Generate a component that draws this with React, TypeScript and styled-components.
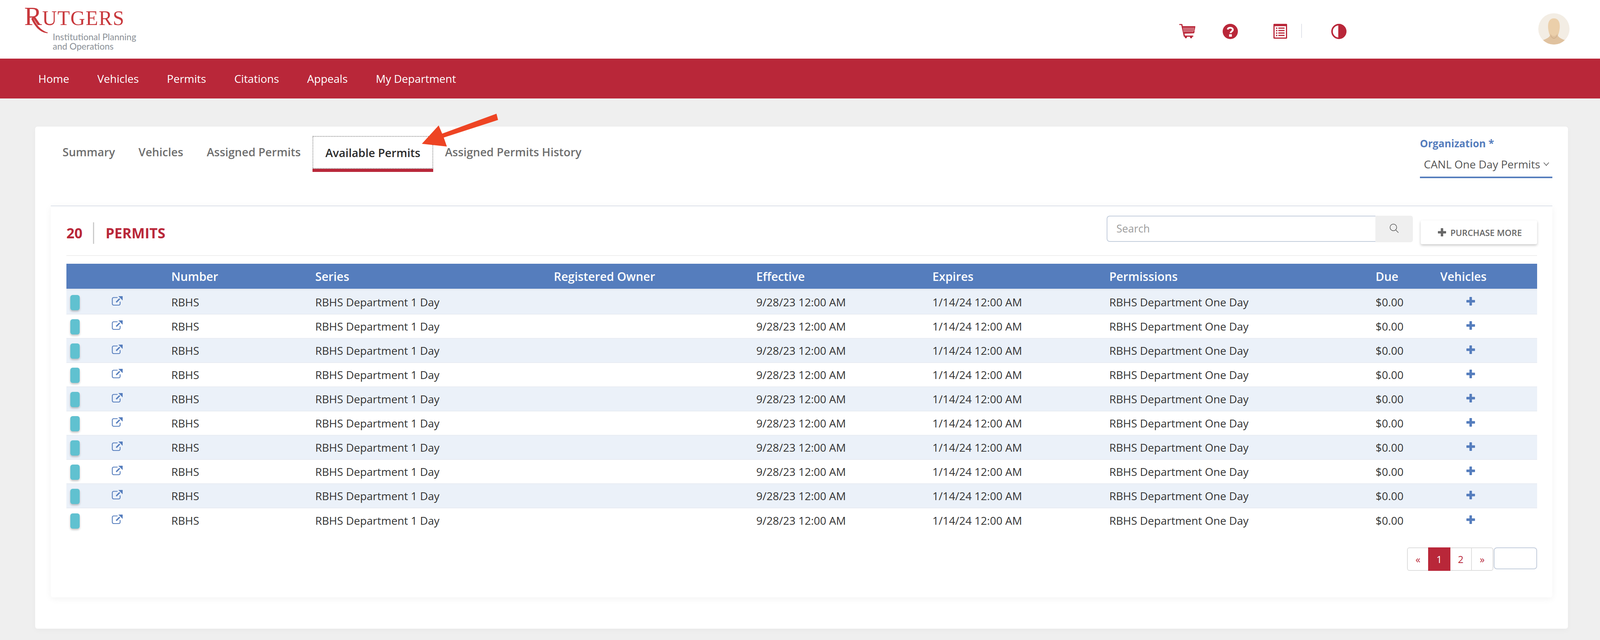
import styled, { createGlobalStyle } from 'styled-components';

const RED = '#b92739';
const BLUE = '#557dbd';

const GlobalStyle = createGlobalStyle`
  html, body {
    margin: 0;
    padding: 0;
    background: #efefef;
    overflow: hidden;
  }
  * {
    box-sizing: border-box;
  }
  body {
    font-family: 'Open Sans', 'Liberation Sans', sans-serif;
    font-size: 28px;
    color: #333;
  }
`;

// the browser window tops out narrower than the screenshot, so the columns flex
const columns = '124fr 163fr 394fr 653fr 554fr 482fr 484fr 729fr 177fr 265fr';

const Page = styled.div`
  position: relative;
  width: 100%;
  height: 1638px;
`;

const Header = styled.header`
  display: flex;
  height: 150px;
  background: #fff;
  padding: 0 78px 0 62px;
`;

const HeaderIcons = styled.div`
  display: flex;
  align-items: flex-start;
  margin-left: auto;
  padding-top: 61px;
`;

const HeaderIcon = styled.span<{ $left: number }>`
  display: block;
  height: 40px;
  margin-left: ${(p) => p.$left}px;
  svg {
    display: block;
  }
`;

const HeaderDivider = styled.span`
  display: block;
  width: 2px;
  height: 36px;
  margin-left: 36px;
  background: #e0e4ea;
`;

const Avatar = styled.div`
  width: 80px;
  height: 80px;
  margin: 34px 0 0 491px;
  border-radius: 50%;
  overflow: hidden;
  svg {
    display: block;
  }
`;

const Nav = styled.nav`
  display: flex;
  align-items: center;
  gap: 72px;
  height: 102px;
  padding-left: 98px;
  background: ${RED};
`;

const NavLink = styled.a`
  color: #fff;
  font-size: 28px;
  line-height: 38px;
`;

const Card = styled.main`
  height: 1285px;
  margin: 72px 82px 0 90px;
  padding: 24px 40px 0;
  background: #fff;
  border-radius: 6px;
  box-shadow: 0 4px 16px rgba(0, 0, 0, 0.03);
`;

const TopRow = styled.div`
  display: flex;
  justify-content: space-between;
  height: 178px;
`;

const Tabs = styled.div`
  display: flex;
  align-items: flex-start;
`;

const Tab = styled.div<{ $active?: boolean }>`
  height: 92px;
  border-bottom: 8px solid ${(p) => (p.$active ? RED : 'transparent')};
`;

const TabLabel = styled.span<{ $active?: boolean }>`
  display: flex;
  align-items: center;
  height: 84px;
  padding: ${(p) => (p.$active ? '0 31px' : '0 30px 4px')};
  border: ${(p) => (p.$active ? '2px dotted #8a8a8a' : 'none')};
  font-size: 29px;
  font-weight: 600;
  color: ${(p) => (p.$active ? '#2a2a2a' : '#6e6e6e')};
  white-space: nowrap;
`;

const Organization = styled.div`
  width: 339px;
`;

const OrgLabel = styled.div`
  height: 38px;
  font-size: 26px;
  line-height: 38px;
  font-weight: 700;
  color: ${BLUE};
`;

const OrgSelect = styled.div`
  display: flex;
  align-items: center;
  justify-content: space-between;
  height: 70px;
  padding: 2px 8px 0 10px;
  border-bottom: 4px solid ${BLUE};
  font-size: 28px;
  color: #555;
  white-space: nowrap;
`;

const Panel = styled.section`
  height: 1003px;
  padding: 0 39px 0 40px;
  background: #fff;
  border-top: 2px solid #dde2ea;
  border-radius: 0 0 6px 6px;
  box-shadow: 0 4px 18px rgba(0, 0, 0, 0.05);
`;

const PanelHead = styled.div`
  display: flex;
  align-items: flex-start;
  height: 127px;
  border-bottom: 2px solid #efefef;
  margin-bottom: 20px;
`;

const Title = styled.div`
  display: flex;
  align-items: center;
  height: 55px;
  margin-top: 41px;
  font-size: 36px;
  font-weight: 700;
  color: ${RED};
`;

const TitleDivider = styled.span`
  width: 3px;
  height: 55px;
  margin: 0 29px 0 27px;
  background: #ccc;
`;

const SearchBox = styled.div`
  display: flex;
  width: 784px;
  height: 68px;
  margin: 24px 0 0 auto;
`;

const SearchInput = styled.input`
  flex: 1;
  height: 67px;
  padding: 0 0 2px 23px;
  border: 2px solid #c3cddc;
  border-right: none;
  border-radius: 8px 0 0 8px;
  outline: none;
  background: #fff;
  font-family: inherit;
  font-size: 27px;
  &::placeholder {
    color: #9c9c9c;
  }
`;

const SearchButton = styled.button`
  display: flex;
  align-items: center;
  justify-content: center;
  width: 96px;
  padding: 0 0 4px;
  border: none;
  border-radius: 0 6px 6px 0;
  background: #efefef;
`;

const PurchaseButton = styled.button`
  display: flex;
  align-items: center;
  gap: 11px;
  width: 298px;
  height: 61px;
  margin: 36px 0 0 20px;
  padding: 0 0 0 44px;
  border: none;
  border-radius: 4px;
  background: #fff;
  box-shadow: 0 3px 6px rgba(0, 0, 0, 0.22);
  font-family: inherit;
  font-size: 22px;
  font-weight: 600;
  color: #666;
  white-space: nowrap;
`;

const Row = styled.div<{ $shaded?: boolean; $first?: boolean; $last?: boolean }>`
  display: grid;
  grid-template-columns: ${columns};
  align-items: center;
  height: ${(p) => (p.$first ? 66 : 62)}px;
  background: ${(p) => (p.$shaded ? '#ebf1f9' : '#fff')};
  border-top: ${(p) => (p.$first ? '4px solid #e7ebf2' : 'none')};
  border-bottom: ${(p) => (p.$last ? 'none' : '2px solid #e8ecf3')};
  white-space: nowrap;
`;

const HeadRow = styled.div`
  display: grid;
  grid-template-columns: ${columns};
  align-items: center;
  height: 64px;
  background: ${BLUE};
  font-size: 30px;
  font-weight: 600;
  color: #fff;
  white-space: nowrap;
`;

const Chip = styled.span`
  display: block;
  width: 24px;
  height: 39px;
  margin: 2px 0 0 10px;
  border-radius: 6px;
  background: #60c1d0;
  box-shadow: 0 3px 5px rgba(0, 0, 0, 0.25);
`;

const LinkIcon = styled.svg`
  display: block;
  margin-top: -6px;
`;

const AddCell = styled.span`
  display: block;
  height: 22px;
  margin: -4px 0 0 67px;
  svg {
    display: block;
  }
`;

const Pager = styled.div`
  display: flex;
  justify-content: flex-end;
  align-items: flex-start;
  gap: 1px;
  margin-top: 38px;
`;

const PagerGroup = styled.div`
  display: flex;
  height: 60px;
  border: 2px solid #dedede;
  border-radius: 6px;
`;

const PageCell = styled.a<{ $active?: boolean; $w: number; $line?: boolean }>`
  display: flex;
  align-items: center;
  justify-content: center;
  width: ${(p) => p.$w}px;
  margin: ${(p) => (p.$active ? '-2px 0' : '0')};
  background: ${(p) => (p.$active ? RED : 'transparent')};
  border-right: ${(p) => (p.$line ? '2px solid #dedede' : 'none')};
  font-size: 25px;
  color: ${(p) => (p.$active ? '#fff' : RED)};
`;

const PageInput = styled.input`
  width: 111px;
  height: 56px;
  border: 2px solid #c3cddc;
  border-radius: 8px;
  outline: none;
  background: #fff;
`;

const Arrow = styled.svg`
  position: absolute;
  left: 1070px;
  top: 280px;
  pointer-events: none;
`;

const Logo = () => (
  <svg width="300" height="140" viewBox="0 0 300 140">
    <text y="64" fontFamily="'Liberation Serif', serif" fill="#c8383c">
      <tspan x="0" fontSize="68">
        R
      </tspan>
      <tspan x="46" fontSize="52" letterSpacing="1.5">
        UTGERS
      </tspan>
    </text>
    <path d="M22 44 C30 62 42 78 60 83 L60 85 C40 84 26 66 18 48 Z" fill="#c8383c" />
    <text x="73" y="103" fontFamily="Lato, sans-serif" fontSize="23" fill="#8a9097">
      Institutional Planning
    </text>
    <text x="73" y="127" fontFamily="Lato, sans-serif" fontSize="23" fill="#8a9097">
      and Operations
    </text>
  </svg>
);

const dots: [number, number][] = [];
for (let r = 0; r < 4; r++) {
  for (let c = 0; c < 10 - (r === 3 ? 1 : 0); c++) {
    dots.push([10 + c * 2.9 + r * 0.3, 10 + r * 3]);
  }
}

const CartIcon = () => (
  <svg width="41" height="38" viewBox="0 0 41 38">
    <path d="M0 0.5h6.5a1.5 1.5 0 0 1 1.5 1.2L8.8 6H40a1 1 0 0 1 1 1.2L38.4 23a1.5 1.5 0 0 1-1.5 1.2L13.5 25l.8 5H34.5a1.5 1.5 0 0 1 0 3H33a3 3 0 1 1-5.6 0H19.6a3 3 0 1 1-5.6 0h-1.2a1.5 1.5 0 0 1-1.5-1.2L5 3H0z" fill={RED} />
    {dots.map(([x, y]) => (
      <rect key={`${x}-${y}`} x={x} y={y} width="1.6" height="1.6" fill="#fff" />
    ))}
  </svg>
);

const HelpIcon = () => (
  <svg width="39" height="39" viewBox="0 0 39 39">
    <circle cx="19.5" cy="19.5" r="19.5" fill={RED} />
    <path d="M13 14.5c.5-3 3-4.5 6.5-4.5 3.6 0 6.5 2 6.5 5 0 4.5-5.5 4.5-5.5 8.5" fill="none" stroke="#fff" strokeWidth="4.6" />
    <rect x="16.5" y="26.5" width="7" height="6.5" fill="#fff" />
  </svg>
);

const ListIcon = () => (
  <svg width="35" height="39" viewBox="0 0 35 39">
    <rect width="35" height="38" rx="2" fill={RED} />
    <rect x="3" y="6" width="29" height="29" fill="#fff" />
    {[9.5, 15.7, 22, 28.2].map((y) => (
      <g key={y} fill={RED}>
        <rect x="6.5" y={y} width="3.4" height="3.4" />
        <rect x="12.5" y={y} width="16" height="3" />
      </g>
    ))}
  </svg>
);

const ContrastIcon = () => (
  <svg width="39" height="39" viewBox="0 0 39 39">
    <circle cx="19.5" cy="19.5" r="17.5" fill="#fff" stroke={RED} strokeWidth="4" />
    <path d="M18 0.5h1.5a19 19 0 0 1 0 38H18z" fill={RED} />
  </svg>
);

const AvatarArt = () => (
  <svg width="80" height="80" viewBox="0 0 80 80">
    <rect width="80" height="80" fill="#f3ede4" />
    <path d="M40 13c-10 0-15 8-15 20 0 14 6 34 15 34s15-20 15-34c0-12-5-20-15-20z" fill="#ebcfaa" />
    <path d="M31 52c0 8-6 12-22 18 6 8 18 10 31 10s25-2 31-10c-16-6-22-10-22-18-4 8-14 8-18 0z" fill="#e0c29f" />
    <path d="M31 54c3 6 6 9 9 9s6-3 9-9c0 5-4 11-9 11s-9-6-9-11z" fill="#d0b08c" />
  </svg>
);

const ExternalLink = () => (
  <LinkIcon width="28" height="24" viewBox="0 0 28 24">
    <path d="M15 3.5H5a3.5 3.5 0 0 0-3.5 3.5v12.5a3.5 3.5 0 0 0 3.5 3.5h13a3.5 3.5 0 0 0 3.5-3.5V14" fill="none" stroke={BLUE} strokeWidth="2.2" />
    <path d="M11.5 15.5l9-9" stroke={BLUE} strokeWidth="3.4" fill="none" />
    <path d="M17 0h11v11z" fill={BLUE} />
  </LinkIcon>
);

const Plus = ({ color, size }: { color: string; size: number }) => (
  <svg width={size} height={size} viewBox="0 0 22 22">
    <path d="M8.8 0h4.4a1 1 0 0 1 1 1v6.8H21a1 1 0 0 1 1 1v4.4a1 1 0 0 1-1 1h-6.8V21a1 1 0 0 1-1 1H8.8a1 1 0 0 1-1-1v-6.8H1a1 1 0 0 1-1-1V8.8a1 1 0 0 1 1-1h6.8V1a1 1 0 0 1 1-1z" fill={color} />
  </svg>
);

const rows = Array.from({ length: 10 }, (_, i) => i);

const App = () => {
  return (
    <Page>
      <GlobalStyle />
      <Header>
        <Logo />
        <HeaderIcons>
          <HeaderIcon $left={0}>
            <CartIcon />
          </HeaderIcon>
          <HeaderIcon $left={70}>
            <HelpIcon />
          </HeaderIcon>
          <HeaderIcon $left={91}>
            <ListIcon />
          </HeaderIcon>
          <HeaderDivider />
          <HeaderIcon $left={75}>
            <ContrastIcon />
          </HeaderIcon>
        </HeaderIcons>
        <Avatar>
          <AvatarArt />
        </Avatar>
      </Header>
      <Nav>
        <NavLink>Home</NavLink>
        <NavLink>Vehicles</NavLink>
        <NavLink>Permits</NavLink>
        <NavLink>Citations</NavLink>
        <NavLink>Appeals</NavLink>
        <NavLink>My Department</NavLink>
      </Nav>
      <Card>
        <TopRow>
          <Tabs>
            <Tab>
              <TabLabel>Summary</TabLabel>
            </Tab>
            <Tab>
              <TabLabel>Vehicles</TabLabel>
            </Tab>
            <Tab>
              <TabLabel>Assigned Permits</TabLabel>
            </Tab>
            <Tab $active>
              <TabLabel $active>Available Permits</TabLabel>
            </Tab>
            <Tab>
              <TabLabel>Assigned Permits History</TabLabel>
            </Tab>
          </Tabs>
          <Organization>
            <OrgLabel>Organization *</OrgLabel>
            <OrgSelect>
              CANL One Day Permits
              <svg width="15" height="10" viewBox="0 0 15 10">
                <path d="M1 1l6.5 7.5L14 1" fill="none" stroke="#555" strokeWidth="1.5" />
              </svg>
            </OrgSelect>
          </Organization>
        </TopRow>
        <Panel>
          <PanelHead>
            <Title>
              20
              <TitleDivider />
              PERMITS
            </Title>
            <SearchBox>
              <SearchInput placeholder="Search" />
              <SearchButton>
                <svg width="24" height="24" viewBox="0 0 24 24">
                  <circle cx="10" cy="10" r="8.5" fill="none" stroke="#555" strokeWidth="1.5" />
                  <path d="M16 16.5l7 7" stroke="#555" strokeWidth="1.5" />
                </svg>
              </SearchButton>
            </SearchBox>
            <PurchaseButton>
              <Plus color="#666" size={21} />
              PURCHASE MORE
            </PurchaseButton>
          </PanelHead>
          <HeadRow>
            <span />
            <span />
            <span>Number</span>
            <span>Series</span>
            <span>Registered Owner</span>
            <span>Effective</span>
            <span>Expires</span>
            <span>Permissions</span>
            <span>Due</span>
            <span>Vehicles</span>
          </HeadRow>
          {rows.map((i) => (
            <Row key={i} $shaded={i % 2 === 0} $first={i === 0} $last={i === 9}>
              <Chip />
              <ExternalLink />
              <span>RBHS</span>
              <span>RBHS Department 1 Day</span>
              <span />
              <span>9/28/23 12:00 AM</span>
              <span>1/14/24 12:00 AM</span>
              <span>RBHS Department One Day</span>
              <span>$0.00</span>
              <AddCell>
                <Plus color={BLUE} size={22} />
              </AddCell>
            </Row>
          ))}
          <Pager>
            <PagerGroup>
              <PageCell $w={52}>«</PageCell>
              <PageCell $w={57} $active>
                1
              </PageCell>
              <PageCell $w={55} $line>
                2
              </PageCell>
              <PageCell $w={53}>»</PageCell>
            </PagerGroup>
            <PageInput />
          </Pager>
        </Panel>
      </Card>
      <Arrow width="210" height="100" viewBox="1070 280 210 100">
        <path d="M1080 368L1123 321L1132 342L1271 291L1275 307L1136 352L1144 375Z" fill="#ee4423" />
      </Arrow>
    </Page>
  );
};

export default App;
